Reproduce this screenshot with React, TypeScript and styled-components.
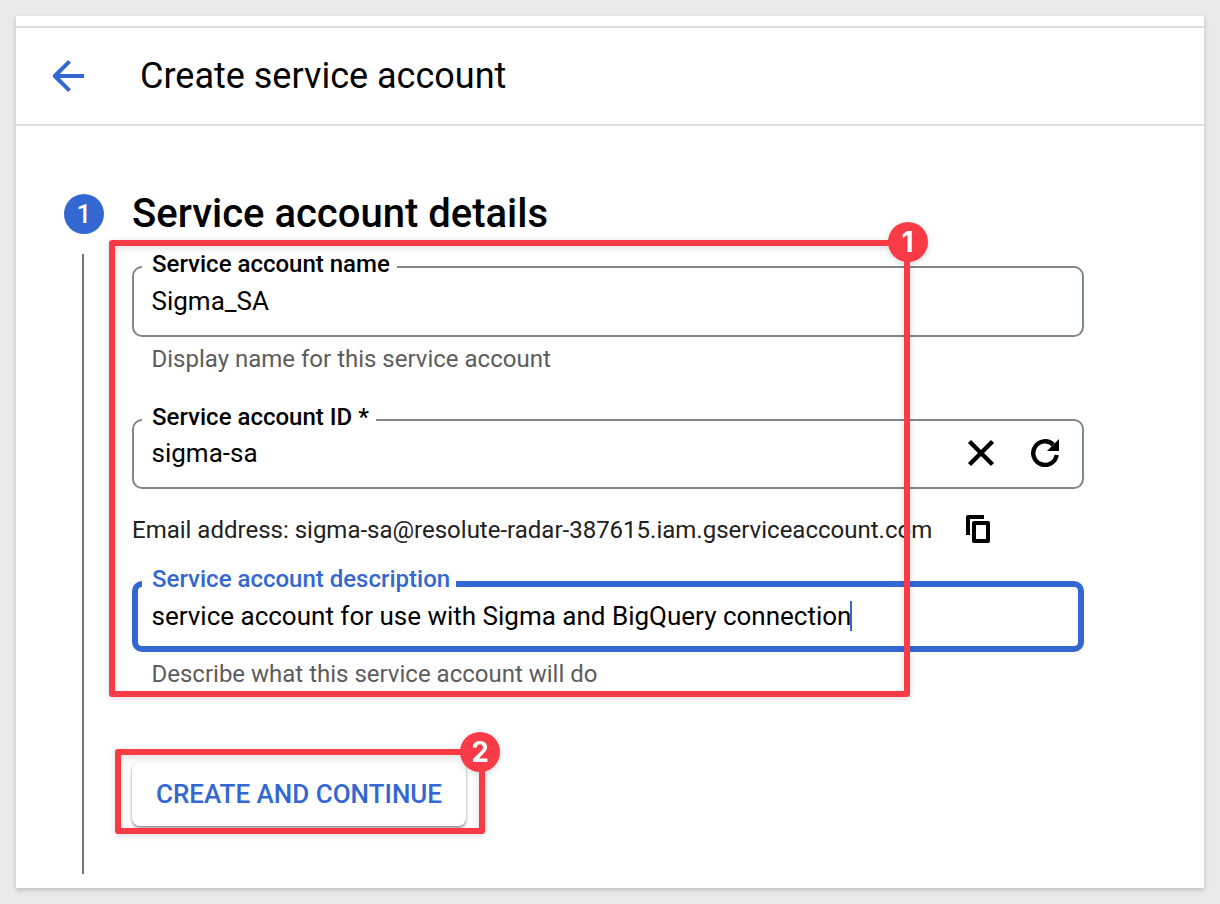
import React from 'react';
import styled, { createGlobalStyle } from 'styled-components';

const BLUE = '#3367d1';
const RED = '#f83b46';

const GlobalStyle = createGlobalStyle`
  *, *::before, *::after { box-sizing: border-box; }
  body {
    margin: 0;
    background: #eaeaea;
    font-family: Roboto, 'Liberation Sans', sans-serif;
    color: #000;
  }
`;

const Page = styled.div`
  height: 904px;
  padding: 16px;
  background: #eaeaea;
`;

const Panel = styled.main`
  display: flex;
  flex-direction: column;
  height: 872px;
  padding-top: 10px;
  background: #fff;
  box-shadow: 0 2px 5px rgba(0, 0, 0, 0.2);
`;

const Header = styled.header`
  display: flex;
  align-items: center;
  gap: 48px;
  height: 100px;
  padding-left: 28px;
  border-top: 2px solid #dadce0;
  border-bottom: 2px solid #dedede;
`;

const BackButton = styled.button`
  display: flex;
  padding: 0;
  border: 0;
  background: none;
  color: ${BLUE};
`;

const Title = styled.h1`
  margin: 0;
  font-size: 36px;
  font-weight: 400;
  line-height: 48px;
  white-space: nowrap;
`;

const Step = styled.section`
  display: grid;
  grid-template-columns: 40px 952px;
  column-gap: 28px;
  padding: 68px 0 0 48px;
`;

const StepRail = styled.div`
  display: flex;
  flex-direction: column;
  align-items: center;
  gap: 20px;
`;

const StepNumber = styled.div`
  display: grid;
  place-items: center;
  width: 40px;
  height: 40px;
  border-radius: 50%;
  background: ${BLUE};
  color: #fff;
  font-size: 26px;
  font-weight: 500;
  line-height: 40px;
`;

const StepLine = styled.div`
  width: 2px;
  height: 620px;
  margin-right: 2px;
  background: #757575;
`;

const StepBody = styled.div`
  display: flex;
  flex-direction: column;
`;

const StepTitle = styled.h2`
  margin: 0;
  height: 40px;
  font-size: 40px;
  font-weight: 500;
  line-height: 40px;
  white-space: nowrap;
`;

const Annotated = styled.div`
  position: relative;
`;

const FieldBox = styled.div<{ $active?: boolean; $height?: number }>`
  position: relative;
  display: flex;
  align-items: center;
  height: ${(p) => p.$height ?? 71}px;
  padding: 0 ${(p) => (p.$active ? 13.5 : 17.5)}px 2px;
  border: ${(p) => (p.$active ? `6px solid ${BLUE}` : '2px solid #80868b')};
  border-radius: 10px;
`;

const FieldLabel = styled.label<{ $active?: boolean; $width: number }>`
  position: absolute;
  top: ${(p) => (p.$active ? -22 : -18)}px;
  left: ${(p) => (p.$active ? 4 : 8)}px;
  width: ${(p) => p.$width}px;
  padding-left: 10px;
  background: #fff;
  color: ${(p) => (p.$active ? BLUE : '#000')};
  font-size: 24px;
  font-weight: 500;
  line-height: 28px;
  white-space: nowrap;
`;

const FieldValue = styled.span`
  font-size: 26px;
  line-height: 32px;
  white-space: nowrap;
`;

const Caret = styled.span`
  width: 2px;
  height: 30px;
  margin-left: -1px;
  background: ${BLUE};
`;

const FieldActions = styled.div`
  display: flex;
  gap: 36px;
  margin-left: auto;
  padding-right: 5.5px;
`;

const Hint = styled.p`
  margin: 8px 0 0 19.5px;
  color: #5c5c5c;
  font-size: 24px;
  line-height: 28px;
  white-space: nowrap;
`;

const EmailRow = styled.div`
  display: flex;
  align-items: center;
  gap: 35px;
  height: 32px;
  color: #212121;
  font-size: 24px;
  white-space: nowrap;
`;

const EmailText = styled.span`
  width: 799px;
  padding-top: 2px;
`;

const Spacer = styled.div<{ $size: number }>`
  height: ${(p) => p.$size}px;
`;

const CreateButton = styled.button`
  width: 334px;
  height: 64px;
  padding: 0;
  border: 0;
  border-radius: 8px;
  background: #fff;
  box-shadow: 0 2px 3px rgba(0, 0, 0, 0.38), 0 1px 4px rgba(0, 0, 0, 0.08);
  color: ${BLUE};
  font-family: inherit;
  font-size: 26px;
  font-weight: 500;
  white-space: nowrap;
`;

const Callout = styled.div<{ $x: number; $y: number; $w: number; $h: number }>`
  position: absolute;
  left: ${(p) => p.$x}px;
  top: ${(p) => p.$y}px;
  width: ${(p) => p.$w}px;
  height: ${(p) => p.$h}px;
  border: 6px solid ${RED};
  border-radius: 3px;
  filter: drop-shadow(0 2px 3px rgba(0, 0, 0, 0.14));
  pointer-events: none;
`;

const CalloutBadge = styled.span<{ $right: number; $top: number }>`
  position: absolute;
  right: ${(p) => p.$right}px;
  top: ${(p) => p.$top}px;
  display: grid;
  place-items: center;
  width: 40px;
  height: 40px;
  border-radius: 50%;
  background: ${RED};
  color: #fff;
  font-family: Inter, sans-serif;
  font-size: 28px;
  font-weight: 700;
  line-height: 1;
`;

const BackIcon = () => (
  <svg width="48" height="48" viewBox="0 0 24 24" fill="none" stroke="currentColor" strokeWidth="2" strokeLinejoin="round">
    <path d="M20 12H5.3M12.75 4.7L5.4 12l7.35 7.3" />
  </svg>
);

const ClearIcon = () => (
  <svg width="28" height="28" viewBox="0 0 28 28" fill="none" stroke="#000" strokeWidth="4.4">
    <path d="M2.5 2.5l23 23M25.5 2.5l-23 23" />
  </svg>
);

const RefreshIcon = () => (
  <svg width="28" height="28" viewBox="0 0 28 28">
    <path d="M25.7 16A11.8 11.8 0 1 1 22.2 5.6" fill="none" stroke="#000" strokeWidth="4.4" />
    <path d="M28 0v12H16z" />
  </svg>
);

const CopyIcon = () => (
  <svg width="24" height="28" viewBox="0 0 24 28" fill="none" stroke="#000" strokeWidth="4" strokeLinejoin="round">
    <path d="M18 2H2v18" />
    <rect x="8" y="8" width="14" height="18" />
  </svg>
);

export default function App() {
  return (
    <>
      <GlobalStyle />
      <Page>
        <Panel>
          <Header>
            <BackButton aria-label="Back">
              <BackIcon />
            </BackButton>
            <Title>Create service account</Title>
          </Header>
          <Step>
            <StepRail>
              <StepNumber>1</StepNumber>
              <StepLine />
            </StepRail>
            <StepBody>
              <StepTitle>Service account details</StepTitle>
              <Spacer $size={32} />
              <Annotated>
                <FieldBox>
                  <FieldLabel $width={255}>Service account name</FieldLabel>
                  <FieldValue>Sigma_SA</FieldValue>
                </FieldBox>
                <Hint>Display name for this service account</Hint>
                <Spacer $size={46} />
                <FieldBox $height={70}>
                  <FieldLabel $width={234}>Service account ID *</FieldLabel>
                  <FieldValue>sigma-sa</FieldValue>
                  <FieldActions>
                    <ClearIcon />
                    <RefreshIcon />
                  </FieldActions>
                </FieldBox>
                <Spacer $size={24} />
                <EmailRow>
                  <EmailText>Email address: sigma-sa@resolute-radar-387615.iam.gserviceaccount.com</EmailText>
                  <CopyIcon />
                </EmailRow>
                <Spacer $size={36} />
                <FieldBox $active>
                  <FieldLabel $active $width={314}>Service account description</FieldLabel>
                  <FieldValue>service account for use with Sigma and BigQuery connection</FieldValue>
                  <Caret />
                </FieldBox>
                <Hint>Describe what this service account will do</Hint>
                <Callout $x={-23} $y={-26} $w={801} $h={457}>
                  <CalloutBadge $right={-23.5} $top={-23.7}>1</CalloutBadge>
                </Callout>
              </Annotated>
              <Spacer $size={74} />
              <Annotated>
                <CreateButton>CREATE AND CONTINUE</CreateButton>
                <Callout $x={-17} $y={-13} $w={370} $h={85}>
                  <CalloutBadge $right={-21} $top={-22.7}>2</CalloutBadge>
                </Callout>
              </Annotated>
            </StepBody>
          </Step>
        </Panel>
      </Page>
    </>
  );
}
